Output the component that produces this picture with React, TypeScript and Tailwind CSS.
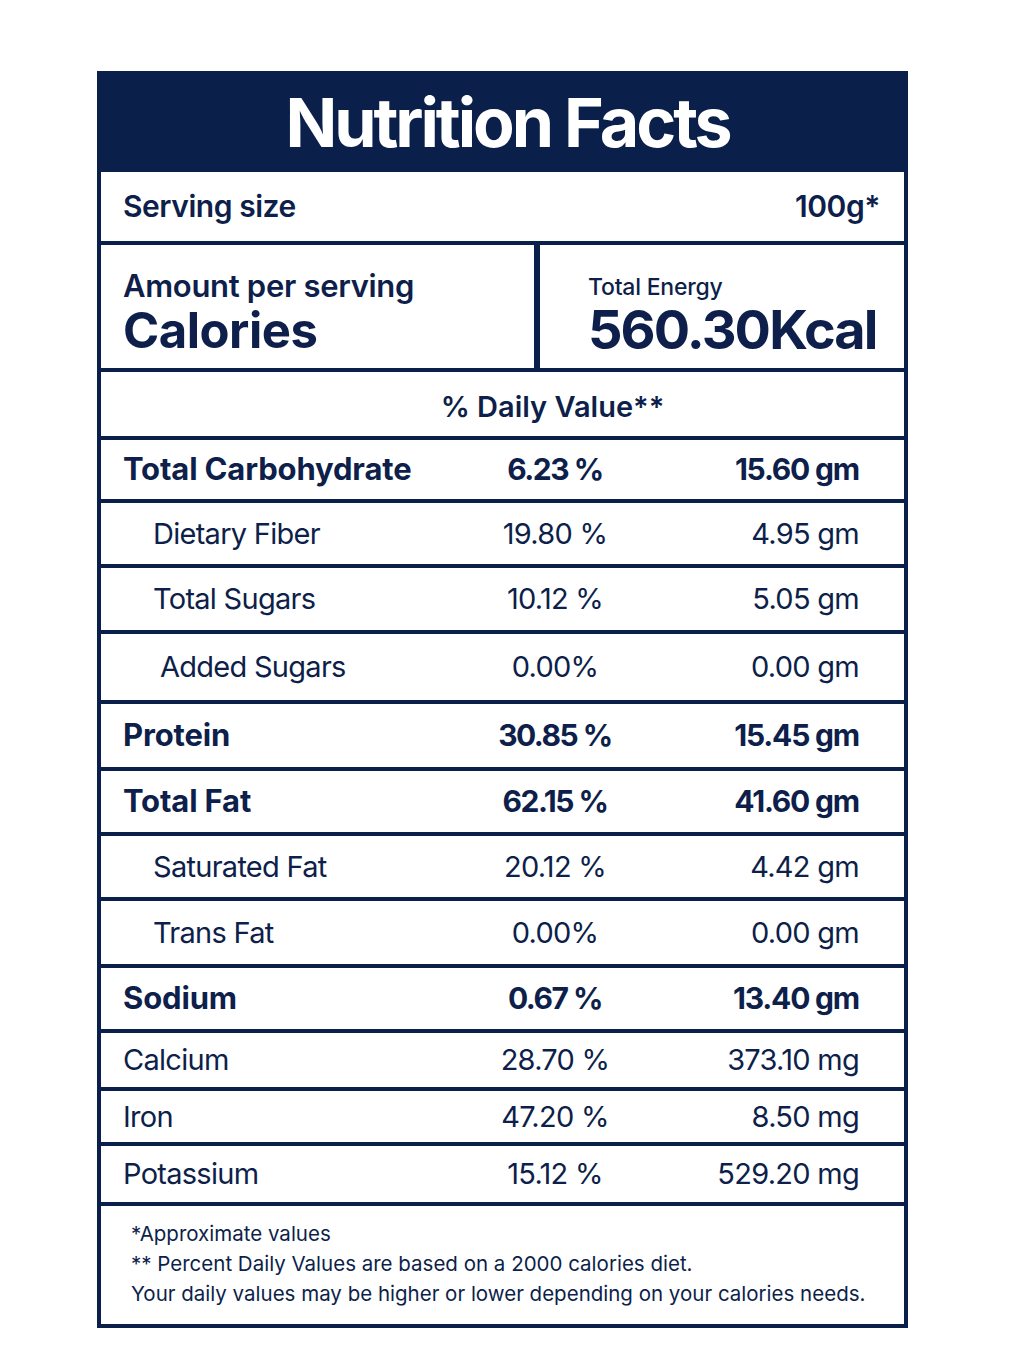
import React from "react";

type Row = {
  label: string;
  pct: string;
  amt: string;
  bold?: boolean;
  indent?: "sm" | "lg";
  h: string;
};

const rows: Row[] = [
  { label: "Total Carbohydrate", pct: "6.23 %", amt: "15.60 gm", bold: true, h: "h-[63px]" },
  { label: "Dietary Fiber", pct: "19.80 %", amt: "4.95 gm", indent: "sm", h: "h-[65px]" },
  { label: "Total Sugars", pct: "10.12 %", amt: "5.05 gm", indent: "sm", h: "h-[66px]" },
  { label: "Added Sugars", pct: "0.00%", amt: "0.00 gm", indent: "lg", h: "h-[70px]" },
  { label: "Protein", pct: "30.85 %", amt: "15.45 gm", bold: true, h: "h-[67px]" },
  { label: "Total Fat", pct: "62.15 %", amt: "41.60 gm", bold: true, h: "h-[65px]" },
  { label: "Saturated Fat", pct: "20.12 %", amt: "4.42 gm", indent: "sm", h: "h-[65px]" },
  { label: "Trans Fat", pct: "0.00%", amt: "0.00 gm", indent: "sm", h: "h-[67px]" },
  { label: "Sodium", pct: "0.67 %", amt: "13.40 gm", bold: true, h: "h-[65px]" },
  { label: "Calcium", pct: "28.70 %", amt: "373.10 mg", h: "h-[58px]" },
  { label: "Iron", pct: "47.20 %", amt: "8.50 mg", h: "h-[55px]" },
  { label: "Potassium", pct: "15.12 %", amt: "529.20 mg", h: "h-[60px]" },
];

export default function App() {
  return (
    <div
      className="min-h-[1365px] w-[1024px] bg-white pt-[71px] text-[#0d1f4a]"
      style={{ fontFamily: "Inter, 'Noto Sans', sans-serif" }}
    >
      <div className="ml-[97px] w-[811px]">
        <div className="flex h-[101px] items-center justify-center bg-[#0b1f4b]">
          <h1 className="pl-[10px] text-[68px] font-bold leading-none tracking-[-0.045em] text-white">
            Nutrition Facts
          </h1>
        </div>
        <div className="border-x-4 border-b-[4px] border-[#0b1f4b] divide-y-4 divide-[#0b1f4b]">
          <div className="flex h-[73px] items-center justify-between pl-[22px] pr-[24px] text-[30px] font-semibold tracking-[-0.015em]">
            <span>Serving size</span>
            <span>100g*</span>
          </div>
          <div className="flex h-[127px]">
            <div className="flex w-[439px] flex-col justify-center border-r-[6px] border-[#0b1f4b] pl-[22px] pt-[10px]">
              <span className="text-[31px] font-semibold leading-[38px] tracking-[-0.01em]">
                Amount per serving
              </span>
              <span className="text-[49px] font-bold leading-[52px] tracking-[-0.01em]">
                Calories
              </span>
            </div>
            <div className="flex flex-1 flex-col justify-center pl-[48px] pt-[18px]">
              <span className="text-[23px] font-medium leading-[28px] tracking-[-0.01em]">
                Total Energy
              </span>
              <span className="text-[54px] font-bold leading-[58px] tracking-[-0.035em]">
                560.30Kcal
              </span>
            </div>
          </div>
          <div className="flex h-[68px] items-center justify-center pl-[100px] pt-[6px] text-[29px] font-semibold tracking-[0em]">
            % Daily Value**
          </div>
          {rows.map((r) => (
            <div
              key={r.label}
              className={`grid ${r.h} grid-cols-[1fr_160px_200px] items-center gap-x-[28px] pr-[45px] ${
                r.bold ? "font-bold text-[31px]" : "font-normal text-[29px] tracking-[-0.025em]"
              } ${r.indent === "sm" ? "pl-[52px]" : r.indent === "lg" ? "pl-[59px]" : "pl-[22px]"}`}
            >
              <span className={r.bold ? "tracking-[-0.005em]" : ""}>{r.label}</span>
              <span className={`pl-[8px] text-center ${r.bold ? "text-[30px] tracking-[-0.05em]" : ""}`}>
                {r.pct}
              </span>
              <span className={`text-right ${r.bold ? "text-[30px] tracking-[-0.04em]" : ""}`}>
                {r.amt}
              </span>
            </div>
          ))}
          <div className="flex h-[118px] flex-col justify-center pl-[30px] pb-[2px] text-[20.5px] leading-[30px] tracking-[0em]">
            <span>*Approximate values</span>
            <span>** Percent Daily Values are based on a 2000 calories diet.</span>
            <span>Your daily values may be higher or lower depending on your calories needs.</span>
          </div>
        </div>
      </div>
    </div>
  );
}
